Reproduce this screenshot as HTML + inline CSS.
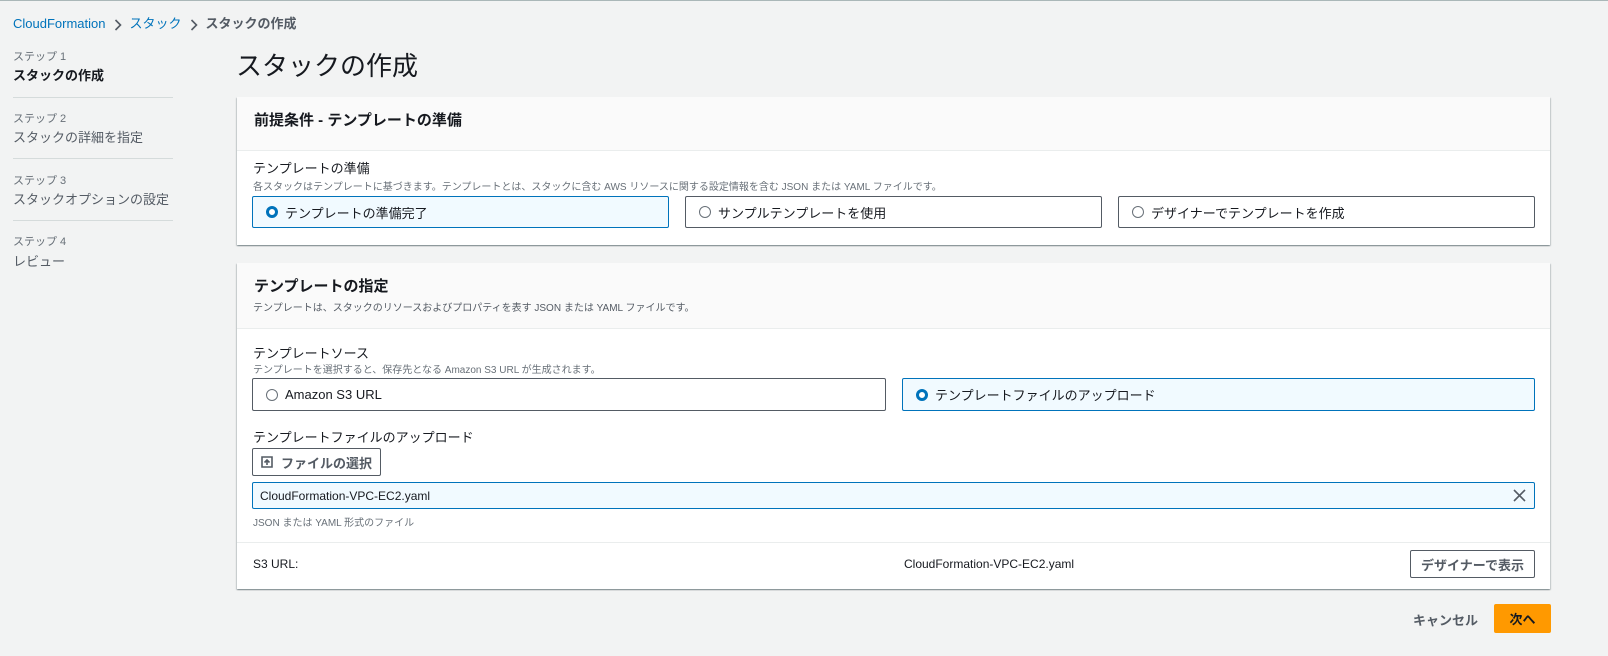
<!DOCTYPE html><html><head><meta charset="utf-8"><style>
*{box-sizing:border-box;margin:0;padding:0}
body{width:1608px;height:656px;background:#f2f3f3;font-family:"Liberation Sans","Noto Sans CJK JP",sans-serif;color:#16191f;position:relative;overflow:hidden;border-top:1px solid #aab7b8}
.a{position:absolute;white-space:nowrap}
.p{position:absolute;background:#fff;box-shadow:0 1px 1px rgba(0,28,36,.3),1px 1px 1px rgba(0,28,36,.15),-1px 1px 1px rgba(0,28,36,.15)}
.h{position:absolute;left:0;right:0;top:0;background:#fafafa;border-bottom:1px solid #eaeded}
.box{position:absolute;border:1px solid #545b64;border-radius:2px;background:#fff;font-size:13px;padding-left:32px;display:flex;align-items:center}
.box.s{border-color:#0073bb;background:#f1faff}
.r{position:absolute;left:13px;top:50%;margin-top:-6px;width:12px;height:12px;border-radius:50%;border:1px solid #687078;background:#fff}
.s .r{border:3.5px solid #0073bb}
.sm{font-size:11px;color:#687078}
.lbl{font-size:13px}
.btn{position:absolute;border:1px solid #545b64;border-radius:2px;background:#fff;font-size:13px;font-weight:bold;color:#545b64;display:flex;align-items:center;justify-content:center}
.chev{display:inline-block;vertical-align:middle;margin:0 8px}
</style></head><body>
<div class="a" style="left:13px;top:12px;font-size:13px"><span style="color:#0073bb">CloudFormation</span><svg class="chev" width="8" height="12" viewBox="0 0 8 12"><path d="M1.5 1l5 5-5 5" fill="none" stroke="#545b64" stroke-width="1.6"/></svg><span style="color:#0073bb">スタック</span><svg class="chev" width="8" height="12" viewBox="0 0 8 12"><path d="M1.5 1l5 5-5 5" fill="none" stroke="#545b64" stroke-width="1.6"/></svg><span style="color:#545b64;font-weight:bold">スタックの作成</span></div>

<div class="a sm" style="left:13px;top:47px">ステップ 1</div>
<div class="a" style="left:13px;top:64px;font-size:13px;font-weight:bold">スタックの作成</div>
<div class="a" style="left:13px;top:96px;width:160px;border-top:1px solid #d5dbdb"></div>
<div class="a sm" style="left:13px;top:109px">ステップ 2</div>
<div class="a" style="left:13px;top:126px;font-size:13px;color:#545b64">スタックの詳細を指定</div>
<div class="a" style="left:13px;top:157px;width:160px;border-top:1px solid #d5dbdb"></div>
<div class="a sm" style="left:13px;top:171px">ステップ 3</div>
<div class="a" style="left:13px;top:188px;font-size:13px;color:#545b64">スタックオプションの設定</div>
<div class="a" style="left:13px;top:219px;width:160px;border-top:1px solid #d5dbdb"></div>
<div class="a sm" style="left:13px;top:232px">ステップ 4</div>
<div class="a" style="left:13px;top:250px;font-size:13px;color:#545b64">レビュー</div>

<div class="a" style="left:236px;top:45px;font-size:26px;color:#16191f">スタックの作成</div>

<div class="p" style="left:237px;top:96px;width:1313px;height:148px">
<div class="h" style="height:54px"><div class="a" style="left:17px;top:12px;font-size:15px;font-weight:bold">前提条件 - テンプレートの準備</div></div>
<div class="a lbl" style="left:16px;top:61px">テンプレートの準備</div>
<div class="a sm" style="left:16px;top:81px;font-size:10px">各スタックはテンプレートに基づきます。テンプレートとは、スタックに含む AWS リソースに関する設定情報を含む JSON または YAML ファイルです。</div>
<div class="box s" style="left:15px;top:99px;width:417px;height:32px"><span class="r"></span>テンプレートの準備完了</div>
<div class="box" style="left:448px;top:99px;width:417px;height:32px"><span class="r"></span>サンプルテンプレートを使用</div>
<div class="box" style="left:881px;top:99px;width:417px;height:32px"><span class="r"></span>デザイナーでテンプレートを作成</div>
</div>

<div class="p" style="left:237px;top:262px;width:1313px;height:326px">
<div class="h" style="height:66px"><div class="a" style="left:17px;top:12px;font-size:15px;font-weight:bold">テンプレートの指定</div><div class="a sm" style="left:16px;top:36px;font-size:10px;color:#545b64">テンプレートは、スタックのリソースおよびプロパティを表す JSON または YAML ファイルです。</div></div>
<div class="a lbl" style="left:16px;top:80px">テンプレートソース</div>
<div class="a sm" style="left:16px;top:98px;font-size:10px">テンプレートを選択すると、保存先となる Amazon S3 URL が生成されます。</div>
<div class="box" style="left:15px;top:115px;width:634px;height:33px"><span class="r"></span>Amazon S3 URL</div>
<div class="box s" style="left:665px;top:115px;width:633px;height:33px"><span class="r"></span>テンプレートファイルのアップロード</div>
<div class="a lbl" style="left:16px;top:164px">テンプレートファイルのアップロード</div>
<div class="btn" style="left:15px;top:185px;width:129px;height:28px"><svg width="12" height="12" viewBox="0 0 12 12" style="margin-right:8px"><path d="M1 1h10v10H1zM6 9V4M3.5 6.5L6 4l2.5 2.5" fill="none" stroke="#545b64" stroke-width="1.6"/></svg>ファイルの選択</div>
<div class="a" style="left:15px;top:219px;width:1283px;height:27px;border:1px solid #0073bb;border-radius:2px;background:#f1faff;font-size:12px;padding:6px 7px">CloudFormation-VPC-EC2.yaml<svg class="a" style="right:8px;top:6px" width="13" height="13" viewBox="0 0 13 13"><path d="M1 1l11 11M12 1L1 12" stroke="#545b64" stroke-width="1.6"/></svg></div>
<div class="a sm" style="left:16px;top:251px;font-size:10px">JSON または YAML 形式のファイル</div>
<div class="a" style="left:0;right:0;top:279px;border-top:1px solid #eaeded"></div>
<div class="a" style="left:16px;top:294px;font-size:12px">S3 URL:</div>
<div class="a" style="left:667px;top:294px;font-size:12px">CloudFormation-VPC-EC2.yaml</div>
<div class="btn" style="left:1173px;top:287px;width:125px;height:28px">デザイナーで表示</div>
</div>

<div class="a" style="left:1413px;top:609px;font-size:13px;font-weight:bold;color:#545b64">キャンセル</div>
<div class="a" style="left:1494px;top:603px;width:57px;height:29px;background:#ff9900;border-radius:2px;font-size:13px;font-weight:bold;color:#16191f;display:flex;align-items:center;justify-content:center">次へ</div>
</body></html>
